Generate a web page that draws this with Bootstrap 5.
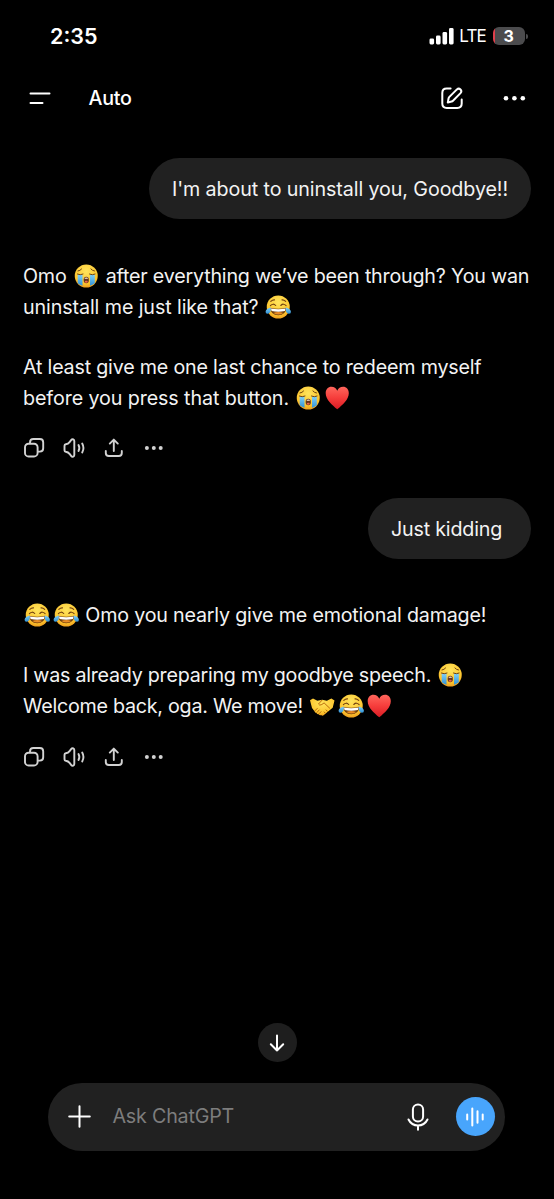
<!DOCTYPE html>
<html lang="en" data-bs-theme="dark">
<head>
<meta charset="utf-8">
<meta name="viewport" content="width=device-width, initial-scale=1">
<title>Chat</title>
<link href="https://cdn.jsdelivr.net/npm/bootstrap@5.3.0/dist/css/bootstrap.min.css" rel="stylesheet">
<style>
  body { background: #000; color: #f3f3f3; font-family: Inter, "Liberation Sans", sans-serif; font-size: 19.7px; line-height: 31px; letter-spacing: -.2px; }
  svg { display: block; flex: none; fill: none; stroke: currentColor; stroke-width: 2; stroke-linecap: round; stroke-linejoin: round; }
  .screen { width: 554px; height: 1199px; overflow: hidden; }
  .status { height: 70px; padding: 2px 26.5px 0 50px; }
  .clock { font-size: 21.5px; font-weight: 600; color: #fff; letter-spacing: 0; }
  .lte { font-size: 17px; letter-spacing: -.8px; color: #fff; margin: 0 6.5px 0 5.5px; }
  .battery { width: 32px; height: 18px; border-radius: 6px; background: linear-gradient(90deg, #e0404c 2px, #4b4b4d 2px); color: #fff; font: 700 16px/18px Inter, sans-serif; }
  .cap { width: 2px; height: 5px; border-radius: 0 2px 2px 0; background: #4b4b4d; margin-left: 1px; }
  .topbar { height: 56px; padding: 0 28px; color: #fff; }
  .model { margin-left: 36.5px; padding-top: 1px; font-weight: 500; letter-spacing: -.3px; }
  .more { margin-left: 39px; }
  .chat { padding: 32px 23px 0; height: 897px; }
  .bubble { height: 61px; border-radius: 30.5px; background: #212121; padding: 2px 0 0 23px; white-space: nowrap; }
  .bubble-long { width: 382px; }
  .bubble-short { width: 163px; margin-top: 38px; }
  .reply { margin-top: 42px; white-space: nowrap; }
  .reply p { margin-bottom: 29px; }
  .reply .emoji { display: inline-block; width: 28.5px; height: 24px; vertical-align: -5px; stroke: none; }
  .reply-last { margin-top: 41px; }
  .reply-last + .tools { margin-top: -6px; }
  .loose { letter-spacing: -.1px; }
  .tight { letter-spacing: -.25px; }
  .tools { gap: 16px; height: 24px; margin-top: -7px; color: #d2d2d2; }
  .tools svg { width: 24px; height: 24px; stroke-width: 1.9; }
  .down { width: 39px; height: 39px; background: #1e1e1e; color: #fff; }
  .composer { width: 457px; height: 68px; background: #212121; margin: 20.5px 0 0 48.4px; padding: 0 10.5px 0 19.6px; color: #fff; }
  .ask { color: #7d7d7d; margin-left: 21.500px; letter-spacing: -.2px; }
  .voice { width: 39px; height: 39px; background: #48a5fc; margin-left: 27px; }
  .defs { position: absolute; }
</style>
</head>
<body>
<svg class="defs" width="0" height="0" aria-hidden="true">
  <defs>
    <radialGradient id="face" cx=".5" cy=".3" r=".75"><stop offset="0" stop-color="#ffe45c"/><stop offset=".7" stop-color="#fcc52f"/><stop offset="1" stop-color="#ea9419"/></radialGradient>
    <linearGradient id="red" x1="0" y1="0" x2="0" y2="1"><stop offset="0" stop-color="#ff665c"/><stop offset=".5" stop-color="#f63d3b"/><stop offset="1" stop-color="#d81c25"/></linearGradient>
    <linearGradient id="tear" x1="0" y1="0" x2="0" y2="1"><stop offset="0" stop-color="#81d1f8"/><stop offset="1" stop-color="#3191d5"/></linearGradient>
    <symbol id="cry" viewBox="0 0 28.5 24">
      <circle cx="14.250" cy="12" r="11.500" fill="url(#face)"/>
      <path d="M5.700 10.600h4.800v11.200q-2.600-.8-4.800-2.600zM18 10.600h4.800v8.600q-2.200 1.800-4.800 2.600z" fill="url(#tear)"/>
      <path d="M5.400 10.100q2.800 1.400 5.600 0M17.500 10.100q2.800 1.400 5.600 0M6 7q2.200-.3 3.600-2M22.500 7q-2.200-.3-3.600-2" fill="none" stroke="#70420e" stroke-width="1"/>
      <ellipse cx="14.250" cy="16" rx="2.600" ry="3.200" fill="#65331a"/>
      <path d="M12.700 14.100q1.600-1.200 3.100 0v.6h-3.100z" fill="#fff4df"/><ellipse cx="14.250" cy="17.700" rx="1.500" ry="1" fill="#ed654e"/>
    </symbol>
    <symbol id="joy" viewBox="0 0 28.5 24">
      <circle cx="14.250" cy="12" r="11.500" fill="url(#face)"/>
      <path d="M6.200 12.700q8 2 16.100 0-.5 7.500-8.050 7.500T6.200 12.700z" fill="#71400f"/>
      <path d="M6.900 13.400q7.300 1.600 14.700 0l-.7 2.500q-6.700 1.500-13.300 0z" fill="#fff"/>
      <path d="M9.300 18.100q5-2.200 9.900 0-4.700 3-9.900 0z" fill="#e88b25"/>
      <path d="M6.400 10.600q2.800-2.800 5.300-.1M16.800 10.500q2.600-2.700 5.300.1M6.800 6.400q1.800-1.700 3.700-1.500M21.700 6.400q-1.800-1.700-3.700-1.500" fill="none" stroke="#71400f" stroke-width="1.100"/>
      <path d="M6.800 12.500q.4 5.700-2.900 6.200-2.600.2-2.300-2.300.4-2.600 5.200-3.900zM21.700 12.500q-.4 5.700 2.900 6.200 2.600.2 2.300-2.300-.4-2.600-5.200-3.900z" fill="url(#tear)"/>
    </symbol>
    <symbol id="heart" viewBox="0 0 28.5 24">
      <path d="M14.250 23.300C9 18.800 2.700 13.700 2.700 7.200c0-3.800 2.400-6.400 5.700-6.400 2.800 0 4.800 1.600 5.850 4C15.300 2.400 17.300.8 20.100.8c3.300 0 5.700 2.600 5.700 6.400 0 6.500-6.300 11.600-11.550 16.100z" fill="url(#red)"/>
    </symbol>
    <symbol id="shake" viewBox="0 0 28.5 24">
      <path d="M2 6.300l3-1.900 4.400 2.300 4.800-1 4.700 1.100 4.500-2.200 3.100 2-1.800 7.100-3.100 2.500-6 5.100q-1.400.9-2.500-.3-1.600.7-2.400-.8-1.700.3-2.200-1.300-1.800 0-2-1.700L4 14z" fill="url(#face)"/>
      <path d="M13.900 6.300L10.500 10q.9 2 3.300.5l2.300-1.600 5.500 5.200M7 16.700l2.300-2.300M9 18.400l2.200-2.400M11.300 19.500l1.700-1.800M16 18l1.300 1M18 16l1.500 1.300" fill="none" stroke="#bb6c0c" stroke-width="1"/>
    </symbol>
    <symbol id="copy" viewBox="0 0 24 24"><rect x="2" y="7.700" width="12.600" height="12.800" rx="3.600"/><path d="M7 7.200V6.400q0-3.400 3.400-3.400h6.400q3.400 0 3.400 3.400v5.800q0 3.400-3.400 3.400h-1.700"/></symbol>
    <symbol id="sound" viewBox="0 0 24 24"><path d="M1.500 9.700q0-1.300 1.300-1.500 2.400-.3 4-2.400l1.300-1.700Q9 2.900 10.300 3.300q1 .4 1 1.700v14q0 1.300-1 1.700-1.300.4-2.200-.8l-1.300-1.700q-1.600-2.100-4-2.400Q1.500 15.600 1.500 14.300z"/><path d="M15.500 9q1.700 3 0 6M19.200 7.500q2.500 4.500 0 9"/></symbol>
    <symbol id="share" viewBox="0 0 24 24"><path d="M10.800 15V3.800M6.800 7.600l4-4 4 4M2.800 15v2q0 3 3 3h10q3 0 3-3V15"/></symbol>
    <symbol id="dots" viewBox="0 0 24 24"><g fill="currentColor" stroke="none"><circle cx="3.900" cy="12" r="2"/><circle cx="10.800" cy="12" r="2"/><circle cx="17.700" cy="12" r="2"/></g></symbol>
  </defs>
</svg>
<div class="screen d-flex flex-column">
  <div class="status d-flex align-items-center">
    <span class="clock me-auto">2:35</span>
    <svg width="25" height="17" viewBox="0 0 25 17"><g fill="#fff" stroke="none"><rect x="0.500" y="10.500" width="4.600" height="6" rx="1.400"/><rect x="7" y="7.500" width="4.600" height="9" rx="1.400"/><rect x="13.500" y="4" width="4.600" height="12.500" rx="1.400"/><rect x="20" y="0" width="4.600" height="16.500" rx="1.400"/></g></svg>
    <span class="lte">LTE</span>
    <span class="battery text-center">3</span><span class="cap"></span>
  </div>
  <header class="topbar d-flex align-items-center">
    <svg width="24" height="24" viewBox="0 0 24 24"><path d="M2.500 7.500h19M2.500 17h12"/></svg>
    <span class="model me-auto">Auto</span>
    <svg width="24" height="24" viewBox="0 0 24 24"><path d="M10.600 2.600H6.700q-4.400 0-4.400 4.400v10.600q0 4.400 4.400 4.400h10.600q4.400 0 4.400-4.400v-4"/><path d="M7.800 16.500l.8-4.200q.2-.8.800-1.400l7.500-7.500q1.800-1.600 3.600 0 1.700 1.800 0 3.700L13 14.700q-.6.600-1.400.8z"/></svg>
    <svg class="more" width="23" height="24" viewBox="0 0 23 24"><g fill="#fff" stroke="none"><circle cx="3" cy="12.300" r="2.300"/><circle cx="11.400" cy="12.300" r="2.300"/><circle cx="19.800" cy="12.300" r="2.300"/></g></svg>
  </header>
  <main class="chat">
    <div class="bubble bubble-long loose d-flex align-items-center ms-auto">I'm about to uninstall you, Goodbye!!</div>
    <div class="reply">
      <p>Omo <svg class="emoji"><use href="#cry"/></svg> after everything we’ve been through? You wan<br><span class="loose">uninstall me just like that? </span><svg class="emoji"><use href="#joy"/></svg></p>
      <p>At least give me one last chance to redeem myself<br><span class="loose">before you press that button. </span><svg class="emoji"><use href="#cry"/></svg><svg class="emoji"><use href="#heart"/></svg></p>
    </div>
    <div class="tools d-flex"><svg><use href="#copy"/></svg><svg><use href="#sound"/></svg><svg><use href="#share"/></svg><svg><use href="#dots"/></svg></div>
    <div class="bubble bubble-short d-flex align-items-center ms-auto">Just kidding</div>
    <div class="reply reply-last">
      <p><svg class="emoji"><use href="#joy"/></svg><svg class="emoji"><use href="#joy"/></svg> Omo you nearly give me emotional damage!</p>
      <p><span class="tight">I was already preparing my goodbye speech. </span><svg class="emoji"><use href="#cry"/></svg><br><span class="tight">Welcome back, oga. We move! </span><svg class="emoji"><use href="#shake"/></svg><svg class="emoji"><use href="#joy"/></svg><svg class="emoji"><use href="#heart"/></svg></p>
    </div>
    <div class="tools d-flex"><svg><use href="#copy"/></svg><svg><use href="#sound"/></svg><svg><use href="#share"/></svg><svg><use href="#dots"/></svg></div>
  </main>
  <div class="down rounded-circle mx-auto d-flex align-items-center justify-content-center"><svg width="20" height="20" viewBox="0 0 20 20"><path d="M10 2.500v15M3.800 11.300l6.200 6.200 6.200-6.200"/></svg></div>
  <div class="composer rounded-pill d-flex align-items-center">
    <svg width="23" height="23" viewBox="0 0 23 23"><path d="M11.500 1.200v20.600M1.200 11.500h20.600"/></svg>
    <span class="ask me-auto">Ask ChatGPT</span>
    <svg width="22" height="28" viewBox="0 0 22 28"><rect x="5.900" y="1.500" width="10.200" height="17" rx="5.100"/><path d="M1.500 16.500q3 6 9.500 6t9.500-6M11 22.500v4.300"/></svg>
    <div class="voice rounded-circle d-flex align-items-center justify-content-center"><svg width="20" height="20" viewBox="0 0 20 20"><path d="M2.200 7.500v5M7.300 1.500v17M12.500 4.200v11.600M17.700 7.500v5"/></svg></div>
  </div>
</div>
<script src="https://cdn.jsdelivr.net/npm/bootstrap@5.3.0/dist/js/bootstrap.bundle.min.js"></script>
</body>
</html>
